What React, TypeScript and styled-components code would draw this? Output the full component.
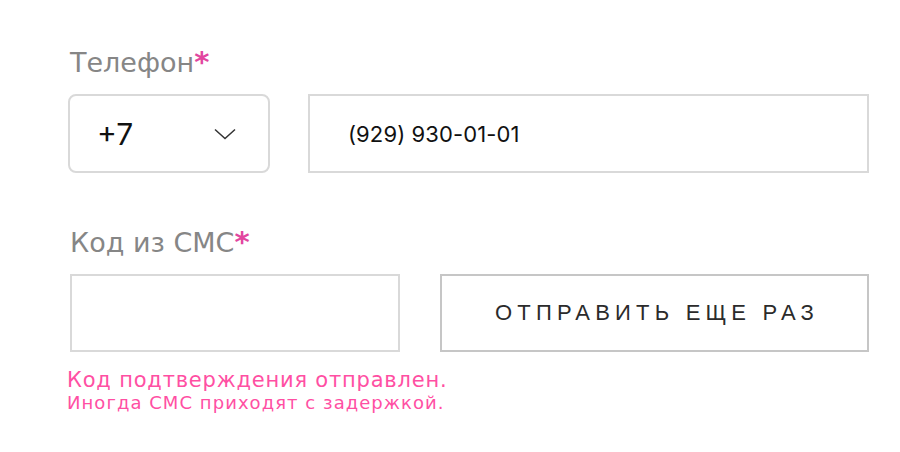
import React from "react";
import styled, { createGlobalStyle } from "styled-components";

const Global = createGlobalStyle`
  html, body { margin: 0; padding: 0; background: #fff; }
  body { width: 900px; height: 452px; overflow: hidden; }
`;

const Form = styled.div`
  display: flex;
  flex-direction: column;
  width: 799px;
  padding: 46px 0 0 70px;
  box-sizing: content-box;
`;

const Field = styled.div<{ $gapTop?: number }>`
  display: flex;
  flex-direction: column;
  margin-top: ${(p) => p.$gapTop ?? 0}px;
`;

const Label = styled.div`
  font-family: "DejaVu Sans", Verdana, sans-serif;
  font-size: 27px;
  line-height: 34px;
  height: 34px;
  color: #868686;
  margin-bottom: 14px;
`;

const Star = styled.span`
  color: #e2469f;
  font-weight: 700;
  font-size: 29px;
  line-height: 1;
`;

const Row = styled.div<{ $gap: number }>`
  display: flex;
  gap: ${(p) => p.$gap}px;
`;

const Select = styled.div`
  display: flex;
  align-items: center;
  justify-content: space-between;
  box-sizing: border-box;
  width: 202px;
  height: 79px;
  margin-left: -2px;
  padding: 0 32px 0 27px;
  border: 2px solid #d9d9d9;
  border-radius: 8px;
  font-family: Inter, "Liberation Sans", Arial, sans-serif;
  font-size: 30px;
  color: #111;
`;

const Input = styled.div<{ $w?: number; $h: number }>`
  display: flex;
  align-items: center;
  box-sizing: border-box;
  ${(p) => (p.$w ? `width: ${p.$w}px;` : "flex: 1;")}
  height: ${(p) => p.$h}px;
  padding-left: 38px;
  border: 2px solid #d9d9d9;
  font-family: Inter, "Liberation Sans", Arial, sans-serif;
  font-size: 22px;
  letter-spacing: 0.1px;
  color: #111;
`;

const Button = styled.button`
  flex: 1;
  height: 78px;
  box-sizing: border-box;
  border: 2px solid #c6c6c6;
  background: #fff;
  font-family: "Liberation Sans", Arial, sans-serif;
  font-size: 22px;
  letter-spacing: 5.2px;
  padding: 0 0 0 5px;
  color: #2b2b2b;
`;

const Notice = styled.div<{ $size: number; $lh: number; $ls: number }>`
  font-family: "DejaVu Sans", Verdana, sans-serif;
  font-size: ${(p) => p.$size}px;
  line-height: ${(p) => p.$lh}px;
  letter-spacing: ${(p) => p.$ls}px;
  color: #ff4fa3;
`;

const Messages = styled.div`
  display: flex;
  flex-direction: column;
  margin-top: 16px;
  margin-left: -3px;
`;

const Chevron = () => (
  <svg width="22" height="12" viewBox="0 0 22 12" fill="none">
    <path d="M1 1.5 L11 10.5 L21 1.5" stroke="#333" strokeWidth="1.5" />
  </svg>
);

export default function App() {
  return (
    <>
      <Global />
      <Form>
        <Field>
          <Label>
            Телефон<Star>*</Star>
          </Label>
          <Row $gap={38}>
            <Select>
              <span>+7</span>
              <Chevron />
            </Select>
            <Input $h={79}>(929) 930-01-01</Input>
          </Row>
        </Field>
        <Field $gapTop={53}>
          <Label>
            Код из СМС<Star>*</Star>
          </Label>
          <Row $gap={40}>
            <Input $w={330} $h={78} />
            <Button>ОТПРАВИТЬ ЕЩЕ РАЗ</Button>
          </Row>
          <Messages>
            <Notice $size={21} $lh={24} $ls={0.8}>
              Код подтверждения отправлен.
            </Notice>
            <Notice $size={18} $lh={21} $ls={1.05}>
              Иногда СМС приходят с задержкой.
            </Notice>
          </Messages>
        </Field>
      </Form>
    </>
  );
}
